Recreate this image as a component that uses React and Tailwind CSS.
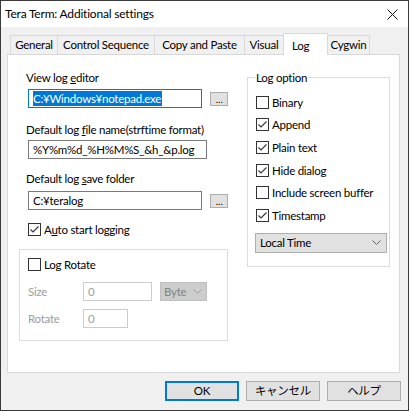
import React from "react";

const font = { fontFamily: "Lato, 'Noto Sans CJK JP', sans-serif" };

function Check({ checked }) {
  return (
    <svg width="13" height="13" viewBox="0 0 13 13" className="shrink-0">
      <rect x="0.5" y="0.5" width="12" height="12" fill="#fff" stroke="#333" />
      {checked && (
        <polyline
          points="2.5,6.5 5,9 10.5,3.5"
          fill="none"
          stroke="#333"
          strokeWidth="1.1"
        />
      )}
    </svg>
  );
}

function CheckRow({ checked, children, className = "" }) {
  return (
    <div className={`flex items-center ${className}`}>
      <Check checked={checked} />
      <span className="ml-[3px] leading-[15px]">{children}</span>
    </div>
  );
}

function Chevron({ color = "#606060" }) {
  return (
    <svg width="9" height="5" viewBox="0 0 9 5">
      <polyline points="0.5,0.5 4.5,4.5 8.5,0.5" fill="none" stroke={color} />
    </svg>
  );
}

function Tab({ label, selected, w, edge = "border-r-0" }) {
  if (selected) {
    return (
      <div
        className={`relative z-10 -mb-px h-[22px] ${w} bg-white border border-b-0 border-[#d9d9d9] flex items-start pt-[3px] pl-[8px]`}
      >
        {label}
      </div>
    );
  }
  return (
    <div
      className={`h-[19px] ${w} bg-[#f0f0f0] border border-b-0 ${edge} border-[#d9d9d9] flex items-center justify-center`}
    >
      {label}
    </div>
  );
}

function Browse() {
  return (
    <div className="ml-[8px] w-[18px] h-[14px] bg-[#e1e1e1] border border-[#adadad] flex items-end justify-center text-[10px] leading-[10px] pb-[1px] tracking-normal">
      ...
    </div>
  );
}

export default function App() {
  return (
    <div
      className="w-[409px] h-[411px] bg-[#f0f0f0] border border-[#3a3a3a] text-[11.5px] tracking-[-0.25px] text-black overflow-hidden"
      style={font}
    >
      {/* title bar */}
      <div className="h-[26px] bg-white flex items-center pl-[4px] pr-[10px]">
        <span className="text-[12px] tracking-[-0.2px]">Tera Term: Additional settings</span>
        <svg width="11" height="11" viewBox="0 0 11 11" className="ml-auto">
          <path d="M0.5 0.5 L10.5 10.5 M10.5 0.5 L0.5 10.5" stroke="#111" strokeWidth="1" />
        </svg>
      </div>

      {/* tabs */}
      <div className="h-[27px] flex items-end pl-[9px]">
        <Tab label="General" w="w-[47px]" />
        <Tab label="Control Sequence" w="w-[97px]" />
        <Tab label="Copy and Paste" w="w-[90px]" />
        <Tab label="Visual" w="w-[39px]" />
        <Tab label="Log" selected w="w-[45px]" />
        <Tab label="Cygwin" w="w-[42px]" edge="border-l-0" />
      </div>

      {/* panel */}
      <div className="ml-[6px] w-[393px] h-[319px] bg-white border border-[#d9d9d9] flex">
        {/* left column */}
        <div className="ml-[11px] w-[209px] pt-[15px]">
          <div className="pl-[7px] leading-[15px]">
            View log <u>e</u>ditor
          </div>
          <div className="mt-[4px] flex items-center">
            <div className="ml-[9px] w-[179px] h-[19px] border border-[#0078d7] flex items-center pl-[4px]">
              <span className="bg-[#0078d7] text-white leading-[15px] pr-[1px]">
                C:¥Windows¥notepad.exe
              </span>
            </div>
            <Browse />
          </div>

          <div className="mt-[14px] pl-[7px] leading-[15px]">
            Default log <u>f</u>ile name(strftime format)
          </div>
          <div className="mt-[3px] ml-[9px] w-[179px] h-[19px] border border-[#7a7a7a] flex items-center pl-[4px]">
            %Y%m%d_%H%M%S_&amp;h_&amp;p.log
          </div>

          <div className="mt-[12px] pl-[7px] leading-[15px]">
            Default log <u>s</u>ave folder
          </div>
          <div className="mt-[5px] flex items-center">
            <div className="ml-[9px] w-[179px] h-[19px] border border-[#7a7a7a] flex items-center pl-[4px]">
              C:¥teralog
            </div>
            <Browse />
          </div>

          <CheckRow checked className="mt-[12px] ml-[9px]">
            A<u>u</u>to start logging
          </CheckRow>

          {/* log rotate group */}
          <div className="mt-[12px] w-[209px] h-[92px] border border-[#dcdcdc] pt-[7px] pl-[8px]">
            <CheckRow>Log Rotate</CheckRow>
            <div className="mt-[10px] flex items-center text-[#9d9d9d]">
              <span className="w-[55px]">Size</span>
              <div className="w-[69px] h-[19px] border border-[#cccccc] flex items-center pl-[4px]">
                0
              </div>
              <div className="ml-[8px] w-[47px] h-[19px] bg-[#cccccc] border border-[#bfbfbf] flex items-center pl-[3px] pr-[4px] text-[#838383]">
                Byte
                <span className="ml-auto">
                  <Chevron color="#a0a0a0" />
                </span>
              </div>
            </div>
            <div className="mt-[8px] flex items-center text-[#9d9d9d]">
              <span className="w-[55px]">Rotate</span>
              <div className="w-[45px] h-[19px] border border-[#cccccc] flex items-center pl-[4px]">
                0
              </div>
            </div>
          </div>
        </div>

        {/* right column */}
        <div className="ml-[19px] pt-[15px]">
          <fieldset className="w-[143px] h-[197px] border border-[#dcdcdc] pl-[7px] pr-[2px]">
            <legend className="px-px leading-[15px]">Log option</legend>
            <div className="pt-[6px] pl-px">
              <CheckRow className="h-[22.6px]">Binary</CheckRow>
              <CheckRow checked className="h-[22.6px]">Append</CheckRow>
              <CheckRow checked className="h-[22.6px]">Plain text</CheckRow>
              <CheckRow checked className="h-[22.6px]">Hide dialog</CheckRow>
              <CheckRow className="h-[22.6px]">Include screen buffer</CheckRow>
              <CheckRow checked className="h-[22.6px]">Timestamp</CheckRow>
            </div>
            <div className="mt-[6px] w-[132px] h-[20px] bg-[#e1e1e1] border border-[#adadad] flex items-center pl-[4px] pr-[5px]">
              Local Time
              <span className="ml-auto">
                <Chevron />
              </span>
            </div>
          </fieldset>
        </div>
      </div>

      {/* buttons */}
      <div className="mt-[8px] flex justify-end gap-[7px] pr-[7px]">
        <button className="w-[74px] h-[20px] bg-[#e1e1e1] border-2 border-[#0078d7] flex items-center justify-center">
          OK
        </button>
        <button className="w-[74px] h-[20px] bg-[#e1e1e1] border border-[#adadad] flex items-center justify-center">
          キャンセル
        </button>
        <button className="w-[74px] h-[20px] bg-[#e1e1e1] border border-[#adadad] flex items-center justify-center">
          ヘルプ
        </button>
      </div>
    </div>
  );
}
